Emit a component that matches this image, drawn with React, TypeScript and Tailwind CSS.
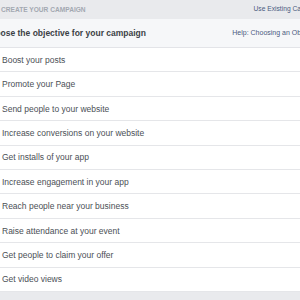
import React from "react";

const items = [
  "Boost your posts",
  "Promote your Page",
  "Send people to your website",
  "Increase conversions on your website",
  "Get installs of your app",
  "Increase engagement in your app",
  "Reach people near your business",
  "Raise attendance at your event",
  "Get people to claim your offer",
  "Get video views",
];

export default function App() {
  return (
    <div
      className="w-[300px] h-[300px] overflow-hidden bg-[#e9eaed] relative"
      style={{ fontFamily: '"Liberation Sans", Arial, sans-serif' }}
    >
      <div className="h-[19px] flex items-center justify-between bg-[#e9eaed] whitespace-nowrap">
        <span className="text-[6.6px] font-bold text-[#a3a8b1] ml-[1px]">CREATE YOUR CAMPAIGN</span>
        <span className="text-[6.7px] text-[#4b5a7f] mr-[-23px]">Use Existing Campaign</span>
      </div>
      <div className="h-[29px] flex items-center justify-between bg-[#f6f7f9] border-b border-[#e3e4e8] whitespace-nowrap">
        <span className="text-[8.5px] font-bold text-[#3c3f45] ml-[-16px] mt-[1px]">Choose the objective for your campaign</span>
        <span className="text-[7px] text-[#4b5a7f] mr-[-21px] mt-[1px]">Help: Choosing an Objective</span>
      </div>
      <div className="bg-white">
        {items.map((t) => (
          <div
            key={t}
            className="h-[24.4px] flex items-center border-b border-[#e5e6e9] pl-[2px] pt-[1px] text-[8.5px] text-[#4b4f56] whitespace-nowrap"
          >
            {t}
          </div>
        ))}
      </div>
    </div>
  );
}
